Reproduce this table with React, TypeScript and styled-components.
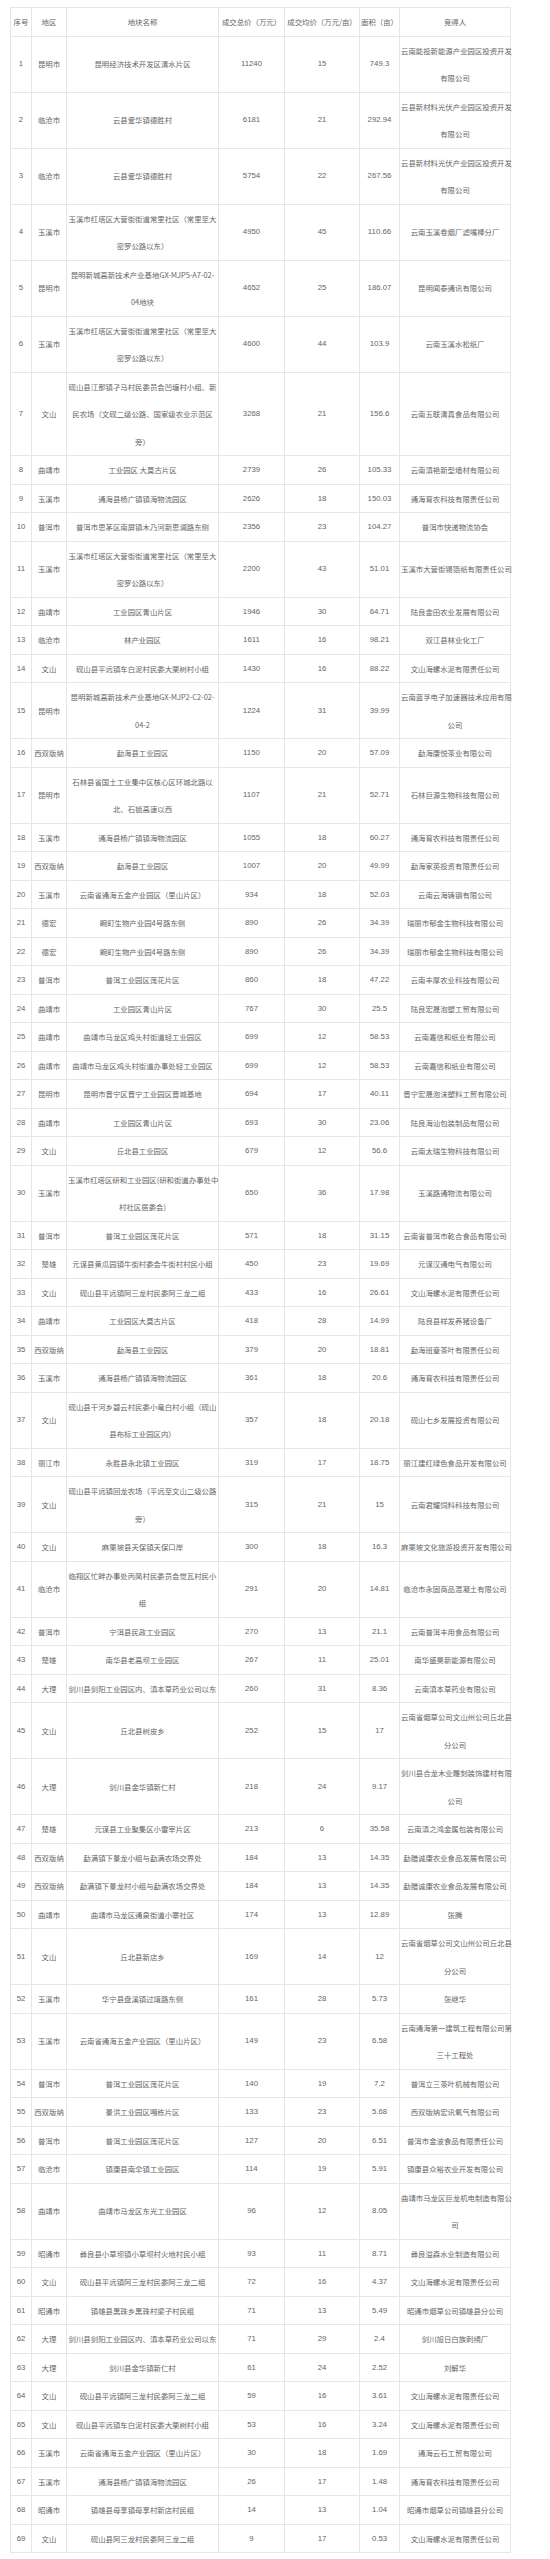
import React from 'react';
import styled, { createGlobalStyle } from 'styled-components';

const GlobalStyle = createGlobalStyle`
  html, body {
    margin: 0;
    padding: 0;
    background: #fff;
  }
`;

type Row = [string, string, string, string, string, string];

const L4 = '玉溪市红塔区大营街街道常里社区（常里至大\n密罗公路以东）';
const HAILUO = '文山海螺水泥有限责任公司';
const YUNONG = '通海育农科技有限责任公司';
const WUJIN = '云南省通海五金产业园区（里山片区）';
const LIANHUA = '普洱工业园区莲花片区';

const ROWS: Row[] = [
  ['昆明市', '昆明经济技术开发区清水片区', '11240', '15', '749.3', '云南能投新能源产业园区投资开发\n有限公司'],
  ['临沧市', '云县爱华镇德胜村', '6181', '21', '292.94', '云县新材料光伏产业园区投资开发\n有限公司'],
  ['临沧市', '云县爱华镇德胜村', '5754', '22', '267.56', '云县新材料光伏产业园区投资开发\n有限公司'],
  ['玉溪市', L4, '4950', '45', '110.66', '云南玉溪卷烟厂滤嘴棒分厂'],
  ['昆明市', '昆明新城高新技术产业基地GX-MJP5-A7-02-\n04地块', '4652', '25', '186.07', '昆明闻泰通讯有限公司'],
  ['玉溪市', L4, '4600', '44', '103.9', '云南玉溪水松纸厂'],
  ['文山', '砚山县江那镇孑马村民委员会凹塘村小组、新\n民农场（文砚二级公路、国家级农业示范区\n旁）', '3268', '21', '156.6', '云南五联清真食品有限公司'],
  ['曲靖市', '工业园区 大莫古片区', '2739', '26', '105.33', '云南滇艳新型墙材有限公司'],
  ['玉溪市', '通海县杨广镇镇海物流园区', '2626', '18', '150.03', YUNONG],
  ['普洱市', '普洱市思茅区南屏镇木乃河新思澜路东侧', '2356', '23', '104.27', '普洱市快递物流协会'],
  ['玉溪市', L4, '2200', '43', '51.01', '玉溪市大营街锡箔纸有限责任公司'],
  ['曲靖市', '工业园区青山片区', '1946', '30', '64.71', '陆良金田农业发展有限公司'],
  ['临沧市', '林产业园区', '1611', '16', '98.21', '双江县林业化工厂'],
  ['文山', '砚山县平远镇车白泥村民委大栗树村小组', '1430', '16', '88.22', HAILUO],
  ['昆明市', '昆明新城高新技术产业基地GX-MJP2-C2-02-\n04-2', '1224', '31', '39.99', '云南蓝孚电子加速器技术应用有限\n公司'],
  ['西双版纳', '勐海县工业园区', '1150', '20', '57.09', '勐海康悦茶业有限公司'],
  ['昆明市', '石林县省国土工业集中区核心区环城北路以\n北、石锁高速以西', '1107', '21', '52.71', '石林巨源生物科技有限公司'],
  ['玉溪市', '通海县杨广镇镇海物流园区', '1055', '18', '60.27', YUNONG],
  ['西双版纳', '勐海县工业园区', '1007', '20', '49.99', '勐海家英投资有限责任公司'],
  ['玉溪市', WUJIN, '934', '18', '52.03', '云南云海铸钢有限公司'],
  ['德宏', '畹町生物产业园4号路东侧', '890', '26', '34.39', '瑞丽市郁金生物科技有限公司'],
  ['德宏', '畹町生物产业园4号路东侧', '890', '26', '34.39', '瑞丽市郁金生物科技有限公司'],
  ['普洱市', LIANHUA, '860', '18', '47.22', '云南丰厚农业科技有限公司'],
  ['曲靖市', '工业园区青山片区', '767', '30', '25.5', '陆良宏晟泡塑工贸有限公司'],
  ['曲靖市', '曲靖市马龙区鸡头村街道轻工业园区', '699', '12', '58.53', '云南嘉信和纸业有限公司'],
  ['曲靖市', '曲靖市马龙区鸡头村街道办事处轻工业园区', '699', '12', '58.53', '云南嘉信和纸业有限公司'],
  ['昆明市', '昆明市晋宁区晋宁工业园区晋城基地', '694', '17', '40.11', '晋宁宏晟泡沫塑料工贸有限公司'],
  ['曲靖市', '工业园区青山片区', '693', '30', '23.06', '陆良海汕包装制品有限公司'],
  ['文山', '丘北县工业园区', '679', '12', '56.6', '云南太瑞生物科技有限公司'],
  ['玉溪市', '玉溪市红塔区研和工业园区(研和街道办事处中\n村社区居委会)', '650', '36', '17.98', '玉溪路通物流有限公司'],
  ['普洱市', LIANHUA, '571', '18', '31.15', '云南省普洱市乾合食品有限公司'],
  ['楚雄', '元谋县黄瓜园镇牛街村委会牛街村村民小组', '450', '23', '19.69', '元谋汉通电气有限公司'],
  ['文山', '砚山县平远镇阿三龙村民委阿三龙二组', '433', '16', '26.61', HAILUO],
  ['曲靖市', '工业园区大莫古片区', '418', '28', '14.99', '陆良县祥发养猪设备厂'],
  ['西双版纳', '勐海县工业园区', '379', '20', '18.81', '勐海班章茶叶有限责任公司'],
  ['玉溪市', '通海县杨广镇镇海物流园区', '361', '18', '20.6', YUNONG],
  ['文山', '砚山县干河乡碧云村民委小竜白村小组（砚山\n县布标工业园区内）', '357', '18', '20.18', '砚山七乡发展投资有限公司'],
  ['丽江市', '永胜县永北镇工业园区', '319', '17', '18.75', '丽江建红绿色食品开发有限公司'],
  ['文山', '砚山县平远镇回龙农场（平远至文山二级公路\n旁）', '315', '21', '15', '云南君耀饲料科技有限公司'],
  ['文山', '麻栗坡县天保镇天保口岸', '300', '18', '16.3', '麻栗坡文化旅游投资开发有限公司'],
  ['临沧市', '临翔区忙畔办事处丙简村民委员会觉瓦村民小\n组', '291', '20', '14.81', '临沧市永固商品混凝土有限公司'],
  ['普洱市', '宁洱县民政工业园区', '270', '13', '21.1', '云南普洱丰用食品有限公司'],
  ['楚雄', '南华县老高坝工业园区', '267', '11', '25.01', '南华盛昊新能源有限公司'],
  ['大理', '剑川县剑阳工业园区内、滇本草药业公司以东', '260', '31', '8.36', '云南滇本草药业有限公司'],
  ['文山', '丘北县树皮乡', '252', '15', '17', '云南省烟草公司文山州公司丘北县\n分公司'],
  ['大理', '剑川县金华镇新仁村', '218', '24', '9.17', '剑川县合龙木业雕刻装饰建材有限\n公司'],
  ['楚雄', '元谋县工业聚集区小雷宰片区', '213', '6', '35.58', '云南滇之鸿金属包装有限公司'],
  ['西双版纳', '勐满镇下景龙小组与勐满农场交界处', '184', '13', '14.35', '勐腊诚康农业食品发展有限公司'],
  ['西双版纳', '勐满镇下景龙村小组与勐满农场交界处', '184', '13', '14.35', '勐腊诚康农业食品发展有限公司'],
  ['曲靖市', '曲靖市马龙区通泉街道小寨社区', '174', '13', '12.89', '张腾'],
  ['文山', '丘北县新店乡', '169', '14', '12', '云南省烟草公司文山州公司丘北县\n分公司'],
  ['玉溪市', '华宁县盘溪镇过境路东侧', '161', '28', '5.73', '张继华'],
  ['玉溪市', WUJIN, '149', '23', '6.58', '云南通海第一建筑工程有限公司第\n三十工程处'],
  ['普洱市', LIANHUA, '140', '19', '7.2', '普洱立三茶叶机械有限公司'],
  ['西双版纳', '景洪工业园区嘎栋片区', '133', '23', '5.68', '西双版纳宏讯氧气有限公司'],
  ['普洱市', LIANHUA, '127', '20', '6.51', '普洱市金波食品有限责任公司'],
  ['临沧市', '镇康县南伞镇工业园区', '114', '19', '5.91', '镇康县众裕农业开发有限公司'],
  ['曲靖市', '曲靖市马龙区东光工业园区', '96', '12', '8.05', '曲靖市马龙区巨龙机电制造有限公\n司'],
  ['昭通市', '彝良县小草坝镇小草坝村火地村民小组', '93', '11', '8.71', '彝良溢森水业制造有限公司'],
  ['文山', '砚山县平远镇阿三龙村民委阿三龙二组', '72', '16', '4.37', HAILUO],
  ['昭通市', '镇雄县黑珠乡黑珠村梁子村民组', '71', '13', '5.49', '昭通市烟草公司镇雄县分公司'],
  ['大理', '剑川县剑阳工业园区内、滇本草药业公司以东', '71', '29', '2.4', '剑川旭日白族刺绣厂'],
  ['大理', '剑川县金华镇新仁村', '61', '24', '2.52', '刘解华'],
  ['文山', '砚山县平远镇阿三龙村民委阿三龙二组', '59', '16', '3.61', HAILUO],
  ['文山', '砚山县平远镇车白泥村民委大栗树村小组', '53', '16', '3.24', HAILUO],
  ['玉溪市', WUJIN, '30', '18', '1.69', '通海云石工贸有限公司'],
  ['玉溪市', '通海县杨广镇镇海物流园区', '26', '17', '1.48', YUNONG],
  ['昭通市', '镇雄县母享镇母享村新店村民组', '14', '13', '1.04', '昭通市烟草公司镇雄县分公司'],
  ['文山', '砚山县阿三龙村民委阿三龙二组', '9', '17', '0.53', HAILUO],
];

const HEADERS = ['序号', '地区', '地块名称', '成交总价（万元）', '成交均价（万元/亩）', '面积（亩）', '竞得人'];
const WIDTHS = [21, 35, 152, 66, 75, 40, 111];

export default function App() {
  return (
    <>
      <GlobalStyle />
      <Page>
        <Table>
          <colgroup>
            {WIDTHS.map((w, i) => (
              <col key={i} style={{ width: w }} />
            ))}
          </colgroup>
          <thead>
            <tr>
              {HEADERS.map((h) => (
                <HeadCell key={h}>{h}</HeadCell>
              ))}
            </tr>
          </thead>
          <tbody>
            {ROWS.map((r, i) => (
              <tr key={i}>
                <Cell $num>{i + 1}</Cell>
                {r.map((v, j) => (
                  <Cell key={j} $num={j >= 2 && j <= 4}>
                    {v}
                  </Cell>
                ))}
              </tr>
            ))}
          </tbody>
        </Table>
      </Page>
    </>
  );
}

const Page = styled.div`
  padding: 7px 0 0 10px;
`;

const Table = styled.table`
  width: 500px;
  table-layout: fixed;
  border-collapse: collapse;
  font-family: 'Noto Sans CJK SC', 'Noto Sans', sans-serif;
  font-size: 7.4px;
  color: #666;
`;

const HeadCell = styled.th`
  border: 1px solid #e6e6e6;
  padding: 0 1px;
  line-height: 27.5px;
  font-weight: 400;
  text-align: center;
  white-space: pre;
  overflow: visible;
`;

const Cell = styled.td<{ $num?: boolean }>`
  border: 1px solid #e6e6e6;
  padding: 0 1px;
  line-height: 27.5px;
  text-align: center;
  vertical-align: middle;
  white-space: pre;
  font-family: ${({ $num }) =>
    $num ? "'Liberation Sans', 'Noto Sans CJK SC', sans-serif" : "'Noto Sans CJK SC', sans-serif"};
  font-size: ${({ $num }) => ($num ? '7.8px' : '7.4px')};
`;
